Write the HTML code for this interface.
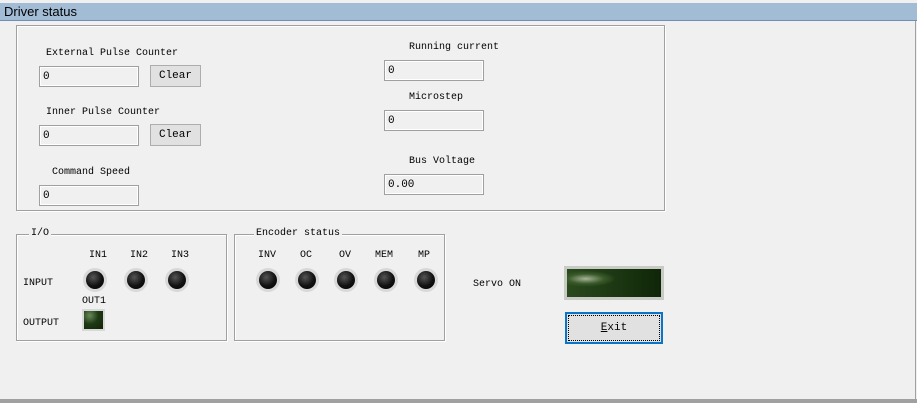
<!DOCTYPE html>
<html><head><meta charset="utf-8"><style>
*{margin:0;padding:0;box-sizing:border-box}
body{width:917px;height:403px;background:#f0f0f0;position:relative;overflow:hidden;font-family:"Liberation Mono","Noto Sans CJK SC",monospace;font-size:10px;color:#000}
.a{position:absolute}
.t{position:absolute;white-space:nowrap;line-height:12px;margin-top:2px;font-weight:bold;font-weight:normal}
.title{left:0;top:3px;width:917px;height:18px;background:#a2bcd6;border-bottom:1px solid #6f8fb5;font-family:"Liberation Sans",sans-serif;font-size:13px;line-height:17px;padding-left:4px}
.grp{position:absolute;border:1px solid #a0a0a0;box-shadow:inset 1px 1px 0 #fff,1px 1px 0 #fff}
.in{position:absolute;width:100px;height:21px;border:1px solid #a0a0a0;background:#f0f0f0;box-shadow:inset 1px 1px 0 #fff,inset -1px -1px 0 #fff;padding-left:3px;font-size:11px;line-height:20px}
.btn{position:absolute;width:51px;height:22px;background:#e1e1e1;border:1px solid #adadad;text-align:center;line-height:20px;font-size:11px}
.leg{position:absolute;background:#f0f0f0;padding:0 2px;line-height:12px;top:-7px}
.led{position:absolute;width:24px;height:24px;border-radius:50%;background:#d8d8d8}
.led:after{content:"";position:absolute;left:3px;top:3px;width:18px;height:18px;border-radius:50%;background:radial-gradient(circle at 40% 35%,#555 0,#111 55%,#000 100%)}
</style></head><body>
<div class="a title">Driver status</div>
<div class="a" style="left:915px;top:21px;width:1px;height:378px;background:#a0a0a0"></div>
<div class="a" style="left:0;top:399px;width:917px;height:4px;background:#a0a0a0"></div>

<div class="grp" style="left:16px;top:25px;width:649px;height:186px"></div>
<div class="t" style="left:46px;top:46px">External Pulse Counter</div>
<div class="in" style="left:39px;top:66px">0</div>
<div class="btn" style="left:150px;top:65px">Clear</div>
<div class="t" style="left:46px;top:105px">Inner Pulse Counter</div>
<div class="in" style="left:39px;top:125px">0</div>
<div class="btn" style="left:150px;top:124px">Clear</div>
<div class="t" style="left:52px;top:165px">Command Speed</div>
<div class="in" style="left:39px;top:185px">0</div>

<div class="t" style="left:409px;top:40px">Running current</div>
<div class="in" style="left:384px;top:60px">0</div>
<div class="t" style="left:409px;top:90px">Microstep</div>
<div class="in" style="left:384px;top:110px">0</div>
<div class="t" style="left:409px;top:154px">Bus Voltage</div>
<div class="in" style="left:384px;top:174px">0.00</div>

<div class="grp" style="left:16px;top:234px;width:211px;height:107px"><div class="leg" style="left:12px">I/O</div></div>
<div class="t" style="left:89px;top:248px">IN1</div>
<div class="t" style="left:130px;top:248px">IN2</div>
<div class="t" style="left:171px;top:248px">IN3</div>
<div class="led" style="left:83px;top:268px"></div>
<div class="led" style="left:124px;top:268px"></div>
<div class="led" style="left:165px;top:268px"></div>
<div class="t" style="left:23px;top:276px">INPUT</div>
<div class="t" style="left:82px;top:294px">OUT1</div>
<div class="t" style="left:23px;top:316px">OUTPUT</div>
<div class="a" style="left:82px;top:309px;width:23px;height:22px;background:#d8d8d8"><div class="a" style="left:2px;top:2px;width:19px;height:18px;background:radial-gradient(circle at 30% 25%,#6a8a5a 0,#1f3a15 45%,#112208 100%)"></div></div>

<div class="grp" style="left:234px;top:234px;width:211px;height:107px"><div class="leg" style="left:19px">Encoder status</div></div>
<div class="t" style="left:258px;top:248px">INV</div>
<div class="t" style="left:300px;top:248px">OC</div>
<div class="t" style="left:339px;top:248px">OV</div>
<div class="t" style="left:375px;top:248px">MEM</div>
<div class="t" style="left:418px;top:248px">MP</div>
<div class="led" style="left:256px;top:268px"></div>
<div class="led" style="left:295px;top:268px"></div>
<div class="led" style="left:334px;top:268px"></div>
<div class="led" style="left:374px;top:268px"></div>
<div class="led" style="left:414px;top:268px"></div>

<div class="t" style="left:473px;top:277px">Servo ON</div>
<div class="a" style="left:564px;top:266px;width:100px;height:34px;background:#c8cbc4"><div class="a" style="left:3px;top:3px;width:94px;height:28px;background:radial-gradient(ellipse 30px 8px at 20% 35%,#a8b49a 0,#3a5a2a 60%,transparent 100%),linear-gradient(90deg,#2a4a1e,#0f2608)"></div></div>
<div class="a" style="left:565px;top:312px;width:98px;height:32px;background:#e1e1e1;border:2px solid #0a74c8"><div class="a" style="left:1px;top:1px;right:1px;bottom:1px;border:1px dotted #000;text-align:center;line-height:24px;font-size:11px"><u>E</u>xit</div></div>
</body></html>
